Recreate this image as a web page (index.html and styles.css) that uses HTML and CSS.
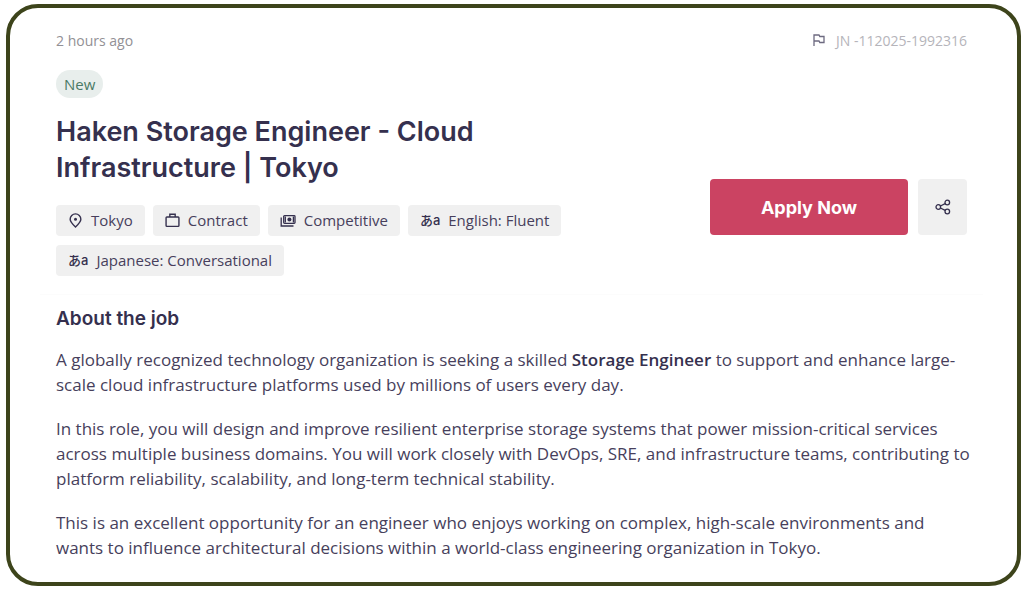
FILE: index.html
```html
<!DOCTYPE html>
<html lang="en">
<head>
    <meta charset="UTF-8">
    <meta name="viewport" content="width=device-width, initial-scale=1.0">
    <title>Haken Storage Engineer - Cloud Infrastructure | Tokyo</title>
    <link rel="stylesheet" href="styles.css">
</head>
<body>
    <main class="job-card">
        <div class="meta">
            <span class="posted">2 hours ago</span>
            <span class="job-number">
                <svg class="icon-flag" viewBox="0 0 14 14" aria-hidden="true">
                    <path d="M2 12V1h5l.8 1.500H12v6H7.800L7 7H2"/>
                </svg>
                JN -112025-1992316
            </span>
        </div>

        <span class="badge">New</span>

        <div class="summary">
            <div class="info">
                <h1>Haken Storage Engineer - Cloud Infrastructure | Tokyo</h1>
                <ul class="tags">
                    <li>
                        <svg class="icon-pin" viewBox="0 0 14 14" aria-hidden="true">
                            <path d="M7 13C4 10.200 2 8 2 5.800a5 5 0 0 1 10 0C12 8 10 10.200 7 13z"/>
                            <circle class="solid" cx="7" cy="5.800" r="1.400"/>
                        </svg>
                        Tokyo
                    </li>
                    <li>
                        <svg class="icon-case" viewBox="0 0 14 14" aria-hidden="true">
                            <rect x="1" y="3.700" width="12" height="8.800" rx=".8"/>
                            <path d="M4.500 3.700V1.200h5v2.500"/>
                        </svg>
                        Contract
                    </li>
                    <li>
                        <svg class="icon-cash" viewBox="0 0 16 14" aria-hidden="true">
                            <rect x="3.700" y="1.700" width="11.300" height="7.600" rx=".8"/>
                            <circle class="solid" cx="9.400" cy="5.500" r="2"/>
                            <path d="M5.300 2.500v6M13.400 2.500v6M1.200 3.500v8.500h12.300"/>
                        </svg>
                        Competitive
                    </li>
                    <li><span class="lang-icon" aria-hidden="true">あa</span>English: Fluent</li>
                    <li><span class="lang-icon" aria-hidden="true">あa</span>Japanese: Conversational</li>
                </ul>
            </div>
            <div class="actions">
                <button type="button" class="apply">Apply Now</button>
                <button type="button" class="share" aria-label="Share">
                    <svg class="icon-share" viewBox="0 0 16 16" aria-hidden="true">
                        <circle cx="3.300" cy="8" r="2.300"/>
                        <circle cx="12.300" cy="3.500" r="2.300"/>
                        <circle cx="12.300" cy="12.500" r="2.300"/>
                        <path d="M5.400 7l4.800-2.400M5.400 9l4.800 2.400"/>
                    </svg>
                </button>
            </div>
        </div>

        <section class="about">
            <h2>About the job</h2>
            <p>A globally recognized technology organization is seeking a skilled <strong>Storage Engineer</strong> to support and enhance large-scale cloud infrastructure platforms used by millions of users every day.</p>
            <p>In this role, you will design and improve resilient enterprise storage systems that power mission-critical services across multiple business domains. You will work closely with DevOps, SRE, and infrastructure teams, contributing to platform reliability, scalability, and long-term technical stability.</p>
            <p>This is an excellent opportunity for an engineer who enjoys working on complex, high-scale environments and wants to influence architectural decisions within a world-class engineering organization in Tokyo.</p>
        </section>
    </main>
</body>
</html>
```

FILE: styles.css
```css
* {
    margin: 0;
    padding: 0;
    box-sizing: border-box;
}

body {
    padding: 4px 5px 3px 6px;
    background: #fff;
    color: #473f5c;
    font-family: "Open Sans", "Noto Sans CJK JP", sans-serif;
    font-size: 17px;
}

.job-card {
    padding: 23px 34px 22px 30px;
    border: 4px solid #3d441b;
    border-radius: 32px;
}

svg {
    fill: none;
    stroke: #35304e;
    stroke-width: 1.3;
    flex-shrink: 0;
}

svg .solid {
    fill: #35304e;
    stroke: none;
}

.meta {
    display: flex;
    justify-content: space-between;
    align-items: center;
    margin: 0 16px 19px;
    font-size: 14px;
    line-height: 20px;
}

.posted {
    color: #929095;
}

.job-number {
    display: flex;
    align-items: center;
    gap: 10px;
    color: #b5b4ba;
}

.icon-flag {
    width: 14px;
    height: 14px;
    stroke: #6d6a80;
}

.badge {
    display: inline-block;
    margin-left: 16px;
    padding: 0 8px;
    border-radius: 14px;
    background: #e8eeec;
    color: #4b7a66;
    font-size: 15px;
    line-height: 28px;
}

.summary {
    display: flex;
    justify-content: space-between;
    align-items: center;
    padding: 0 16px 18px;
}

.info {
    flex: 0 1 60%;
    padding-top: 16px;
}

h1,
h2,
button {
    font-family: Inter, sans-serif;
}

h1 {
    margin-bottom: 19px;
    color: #35304e;
    font-size: 27px;
    font-weight: 600;
    line-height: 36px;
}

.tags {
    display: flex;
    flex-wrap: wrap;
    gap: 9px 8px;
    list-style: none;
}

.tags li {
    display: flex;
    align-items: center;
    gap: 8px;
    padding: 0 12px;
    border-radius: 4px;
    background: #f0f0f0;
    font-size: 15px;
    line-height: 31px;
}

.icon-pin,
.icon-case {
    width: 15px;
    height: 15px;
}

.icon-cash {
    width: 16px;
    height: 14px;
}

.lang-icon {
    color: #35304e;
    font-family: Inter, "Noto Sans CJK JP", sans-serif;
    font-size: 13px;
    font-weight: 500;
}

.actions {
    display: flex;
    gap: 10px;
    padding-top: 40px;
}

button {
    height: 56px;
    border: none;
    border-radius: 4px;
    cursor: pointer;
}

.apply {
    padding: 0 51px;
    background: #cb4362;
    color: #fff;
    font-size: 18px;
    font-weight: 700;
}

.share {
    display: flex;
    justify-content: center;
    align-items: center;
    width: 49px;
    background: #f0f0f0;
}

.icon-share {
    width: 16px;
    height: 16px;
}

.about {
    padding: 11px 8px 0 16px;
    border-top: 1px solid #fcfcfc;
}

h2 {
    margin-bottom: 16px;
    color: #35304e;
    font-size: 19px;
    font-weight: 600;
    line-height: 25px;
}

p {
    line-height: 25px;
}

p + p {
    margin-top: 19px;
}

strong {
    color: #35304e;
    font-weight: 600;
}
```
